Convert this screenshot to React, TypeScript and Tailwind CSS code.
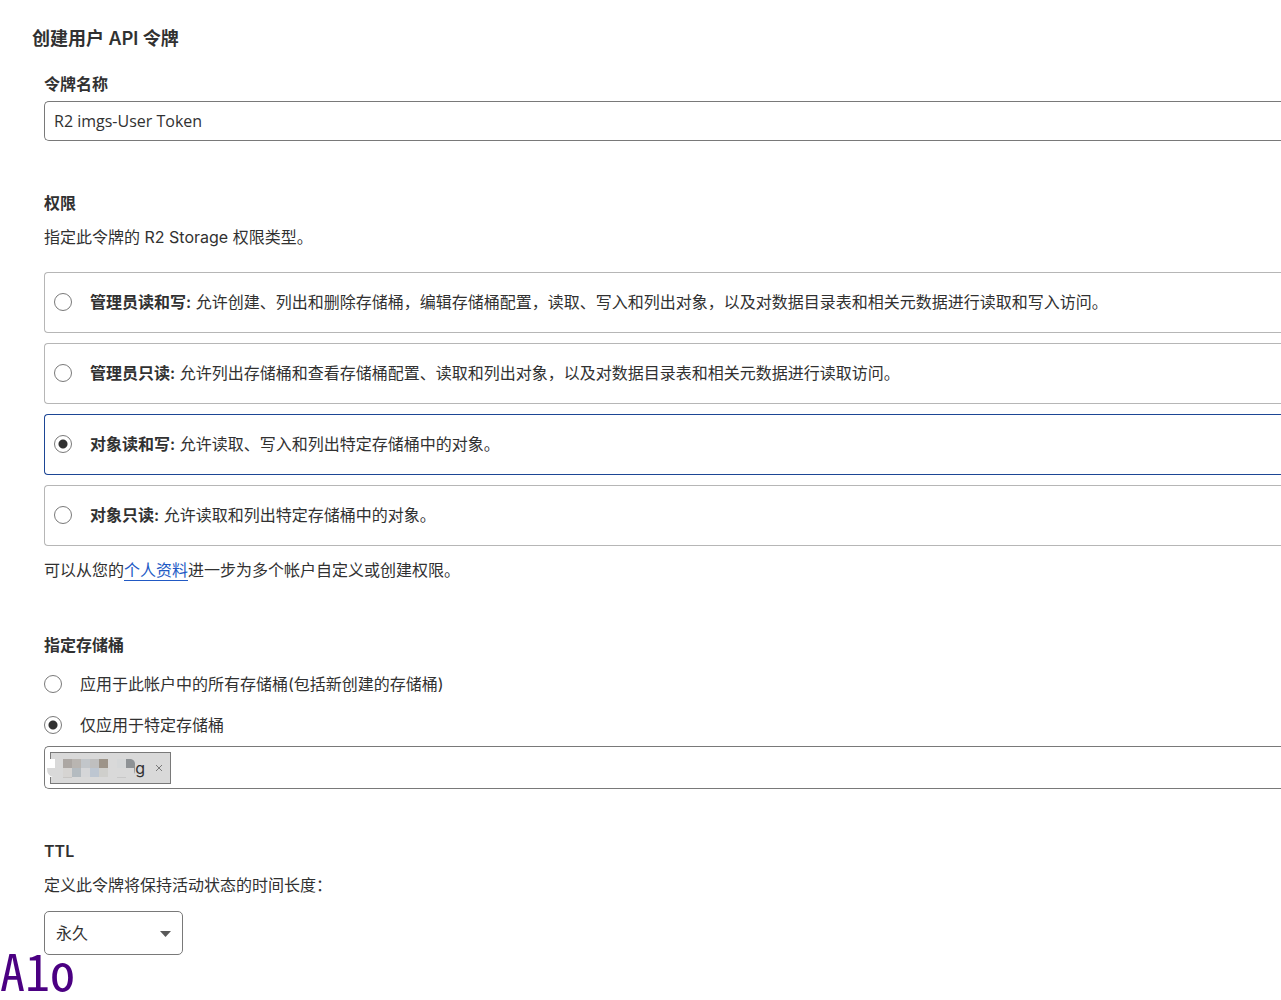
import { useState } from 'react'

const permissions = [
  { id: 'admin-rw', name: '管理员读和写', text: '允许创建、列出和删除存储桶，编辑存储桶配置，读取、写入和列出对象，以及对数据目录表和相关元数据进行读取和写入访问。' },
  { id: 'admin-ro', name: '管理员只读', text: '允许列出存储桶和查看存储桶配置、读取和列出对象，以及对数据目录表和相关元数据进行读取访问。' },
  { id: 'object-rw', name: '对象读和写', text: '允许读取、写入和列出特定存储桶中的对象。' },
  { id: 'object-ro', name: '对象只读', text: '允许读取和列出特定存储桶中的对象。' },
]

const scopes = [
  { id: 'all', text: '应用于此帐户中的所有存储桶(包括新创建的存储桶)' },
  { id: 'specific', text: '仅应用于特定存储桶' },
]

function Radio({ name, checked, onChange }: { name: string; checked: boolean; onChange: () => void }) {
  return (
    <input
      type="radio"
      name={name}
      checked={checked}
      onChange={onChange}
      className="size-[18px] shrink-0 appearance-none rounded-full border border-[#797979] bg-white checked:bg-[radial-gradient(circle,#313131_4px,white_5px)]"
    />
  )
}

// Pixelated part of the bucket name
function MaskedName() {
  return (
    <svg className="absolute -top-px -left-1 h-8 w-[92px]" viewBox="0 0 92 32" aria-hidden="true">
      <rect x="3" y="7" width="5" height="18" fill="#fff" />
      <path d="M0 16H9V25H6Q0 24 0 16Z" fill="#d9d9d9" />
      <rect x="16" y="7" width="9" height="9" fill="#aca7a3" />
      <rect x="25" y="7" width="9" height="9" fill="#b9b5b1" />
      <rect x="34" y="7" width="9" height="9" fill="#c2c6ca" />
      <rect x="43" y="7" width="9" height="9" fill="#bfbfbf" />
      <rect x="52" y="7" width="9" height="9" fill="#9d9489" />
      <rect x="16" y="16" width="9" height="9" fill="#d6d4d2" />
      <rect x="25" y="16" width="9" height="9" fill="#b4bbc0" />
      <rect x="34" y="16" width="9" height="9" fill="#d5d6d8" />
      <rect x="43" y="16" width="9" height="9" fill="#bdc6d1" />
      <rect x="52" y="16" width="9" height="9" fill="#cfcfcc" />
      <rect x="16" y="25" width="9" height="1" fill="#c8c6c4" />
      <rect x="70" y="25" width="9" height="1" fill="#c8c8c8" />
      <rect x="70" y="7" width="9" height="9" fill="#d5d7d8" />
      <path d="M79 7H84Q88 8 88 12V22Q87 20 87 16H79Z" fill="#8e9295" />
    </svg>
  )
}

export default function App() {
  const [tokenName, setTokenName] = useState('R2 imgs-User Token')
  const [permission, setPermission] = useState('object-rw')
  const [scope, setScope] = useState('specific')

  return (
    <main className="min-h-screen overflow-x-clip bg-white pt-[27px] font-['Inter','Noto_Sans_CJK_SC',sans-serif] text-base/6 text-[#313131]">
      <h1 className="pl-8 text-lg/6 font-semibold">创建用户 API 令牌</h1>

      <form className="pl-11">
        <label htmlFor="token-name" className="mt-[21px] block font-semibold">令牌名称</label>
        <input
          id="token-name"
          type="text"
          value={tokenName}
          onChange={e => setTokenName(e.target.value)}
          className="mt-[5px] block h-10 w-full rounded-l-[5px] border border-r-0 border-[#797979] px-[9px] font-['Open_Sans',sans-serif]"
        />

        {/* Permissions */}
        <h2 className="mt-[50px] font-semibold">权限</h2>
        <p className="mt-[10px]">指定此令牌的 R2 Storage 权限类型。</p>
        <div className="mt-[23px] flex flex-col gap-[10px]">
          {permissions.map(p => (
            <label
              key={p.id}
              className={`flex h-[61px] items-center gap-[18px] rounded-l border border-r-0 px-[9px] pb-[2px] whitespace-nowrap ${
                permission === p.id ? 'border-[#1d4695]' : 'border-[#b6b6b6]'
              }`}
            >
              <Radio name="permission" checked={permission === p.id} onChange={() => setPermission(p.id)} />
              <span>
                <strong className="font-semibold">{p.name}:</strong> {p.text}
              </span>
            </label>
          ))}
        </div>
        <p className="mt-[12px]">
          可以从您的<a href="#profile" className="border-b border-[#2159c4] text-[#2159c4]">个人资料</a>进一步为多个帐户自定义或创建权限。
        </p>

        {/* Buckets */}
        <h2 className="mt-[51px] font-semibold">指定存储桶</h2>
        <div className="mt-[15px] flex flex-col gap-[17px]">
          {scopes.map(s => (
            <label key={s.id} className="flex items-center gap-[18px]">
              <Radio name="scope" checked={scope === s.id} onChange={() => setScope(s.id)} />
              {s.text}
            </label>
          ))}
        </div>
        <div className="mt-[9px] flex h-[43px] items-center rounded-l-[5px] border border-r-0 border-[#797979] px-[5px]">
          <span className="relative flex h-8 w-[121px] items-center justify-end gap-[10px] border border-[#797979] bg-[#d9d9d9] pr-[7px]">
            <MaskedName />
            <span>g</span>
            <button type="button" aria-label="移除" className="text-[#797979]">
              <svg className="size-2" viewBox="0 0 8 8" fill="none" stroke="currentColor">
                <path d="M1 1L7 7M7 1L1 7" />
              </svg>
            </button>
          </span>
        </div>

        {/* TTL */}
        <label htmlFor="ttl" className="mt-[50px] block font-semibold">TTL</label>
        <p className="mt-[10px]">定义此令牌将保持活动状态的时间长度：</p>
        <div className="relative mt-[14px] w-[139px]">
          <select id="ttl" className="block h-11 w-full appearance-none rounded-[5px] border border-[#797979] bg-white pr-8 pl-[11px]">
            <option>永久</option>
          </select>
          <svg className="pointer-events-none absolute top-5 right-3 h-[6px] w-[11px]" viewBox="0 0 11 6" fill="#595959" aria-hidden="true">
            <path d="M0 0H11L5.5 6Z" />
          </svg>
        </div>
      </form>

      <p className="font-['Noto_Sans_Mono_CJK_SC','Noto_Sans_CJK_SC',monospace] text-[50px]/7 font-medium text-[#4b0082]">A1o</p>
    </main>
  )
}
